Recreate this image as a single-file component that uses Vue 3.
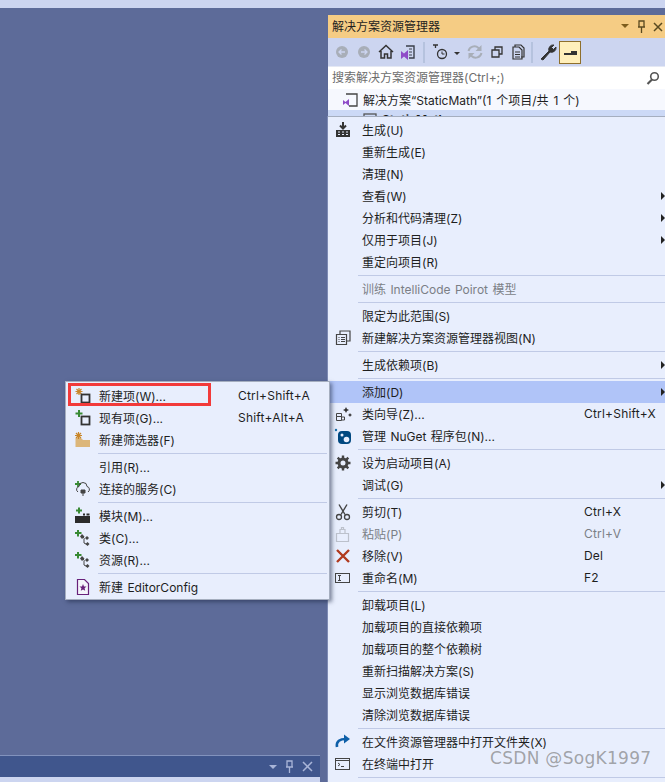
<script setup>
const rightMenu = [
  { t: '生成(U)', i: 'build' }, { t: '重新生成(E)' }, { t: '清理(N)' },
  { t: '查看(W)', a: 1 }, { t: '分析和代码清理(Z)', a: 1 }, { t: '仅用于项目(J)', a: 1 }, { t: '重定向项目(R)' },
  { s: 1 }, { t: '训练 IntelliCode Poirot 模型', d: 1 }, { s: 1 },
  { t: '限定为此范围(S)' }, { t: '新建解决方案资源管理器视图(N)', i: 'view' }, { s: 1 },
  { t: '生成依赖项(B)', a: 1 }, { s: 1 },
  { t: '添加(D)', a: 1, h: 1 }, { t: '类向导(Z)...', k: 'Ctrl+Shift+X', i: 'wizard' }, { t: '管理 NuGet 程序包(N)...', i: 'nuget' }, { s: 1 },
  { t: '设为启动项目(A)', i: 'gear' }, { t: '调试(G)', a: 1 }, { s: 1 },
  { t: '剪切(T)', k: 'Ctrl+X', i: 'cut' }, { t: '粘贴(P)', k: 'Ctrl+V', i: 'paste', d: 1 },
  { t: '移除(V)', k: 'Del', i: 'x' }, { t: '重命名(M)', k: 'F2', i: 'rename' }, { s: 1 },
  { t: '卸载项目(L)' }, { t: '加载项目的直接依赖项' }, { t: '加载项目的整个依赖树' },
  { t: '重新扫描解决方案(S)' }, { t: '显示浏览数据库错误' }, { t: '清除浏览数据库错误' }, { s: 1 },
  { t: '在文件资源管理器中打开文件夹(X)', i: 'open' }, { t: '在终端中打开', i: 'term' }, { s: 1 }
]
const leftMenu = [
  { t: '新建项(W)...', k: 'Ctrl+Shift+A', i: 'newitem' }, { t: '现有项(G)...', k: 'Shift+Alt+A', i: 'existing' },
  { t: '新建筛选器(F)', i: 'filter' }, { s: 1 },
  { t: '引用(R)...' }, { t: '连接的服务(C)', i: 'service' }, { s: 1 },
  { t: '模块(M)...', i: 'module' }, { t: '类(C)...', i: 'cls' }, { t: '资源(R)...', i: 'cls' }, { s: 1 },
  { t: '新建 EditorConfig', i: 'config' }
]
</script>

<template>
  <div class="screen">
    <div class="workspace">
      <div class="topstrip"></div>
      <div class="editor"></div>
      <div class="toolhead">
        <svg class="hicon" width="46" height="14" viewBox="0 0 46 14">
          <path d="M2 5h8l-4 4z" fill="#a9b5d8" />
          <path d="M20 1h5v6h-5zM19 7h7M22.500 7v6" fill="none" stroke="#a9b5d8" stroke-width="1.300" />
          <path d="M36 2l9 9M45 2l-9 9" stroke="#a9b5d8" stroke-width="1.500" />
        </svg>
      </div>
      <div class="toolbody"></div>
    </div>

    <aside class="panel">
      <div class="title">
        <span>解决方案资源管理器</span>
        <svg width="46" height="14" viewBox="0 0 46 14">
          <path d="M2 4h8l-4 4z" fill="#7d5d1c" />
          <path d="M20 1h5v6h-5zM19 7h7M22.500 7v6" fill="none" stroke="#5a4a20" stroke-width="1.300" />
          <path d="M35 3l8 8M43 3l-8 8" stroke="#5a4a20" stroke-width="1.500" />
        </svg>
      </div>
      <div class="toolbar">
        <svg width="246" height="28" viewBox="0 0 246 28">
          <circle cx="18" cy="14" r="6" fill="#a8aeb8" /><path d="M21 14h-6m2.500-2.500L15 14l2.500 2.500" stroke="#ccd5f0" stroke-width="1.300" fill="none" />
          <circle cx="40" cy="14" r="6" fill="#a8aeb8" /><path d="M37 14h6m-2.500-2.500L43 14l-2.500 2.500" stroke="#ccd5f0" stroke-width="1.300" fill="none" />
          <path d="M55 14l7-6.500 7 6.500M57 13v7h3.500v-4h3v4H67v-7" fill="none" stroke="#333" stroke-width="1.500" />
          <path d="M77 13l3 2.500 4-3.500v10l-4-3.500-3 2.500z" fill="#8f4cc8" />
          <path d="M82 8h8v12h-5" fill="none" stroke="#3a3f4a" stroke-width="1.400" /><path d="M85 11h3M85 14h3M85 17h3" stroke="#3a3f4a" />
          <path d="M100 4v21" stroke="#9fb0cc" />
          <path d="M109 7h5M111.500 7v3" stroke="#333" stroke-width="1.300" /><circle cx="118" cy="16" r="4.500" fill="none" stroke="#333" stroke-width="1.300" /><path d="M118 13.500V16h2.500" fill="none" stroke="#333" />
          <path d="M130 14h6l-3 3z" fill="#333" />
          <g transform="translate(7.500 0)"><path d="M137 13a6 6 0 0 1 10-3l2 2M150 15a6 6 0 0 1-10 3l-2-2" fill="none" stroke="#a8aeb8" stroke-width="2" /><path d="M150 7v6h-6M137 21v-6h6" fill="#a8aeb8" /></g>
          <g transform="translate(8 0)"><path d="M160 12h7v7h-7zM163 12V9h7v7h-3" fill="none" stroke="#333" stroke-width="1.300" /></g>
          <g transform="translate(8 0)"><path d="M183 9v-2h6l3 3v9h-3M181 9h6l3 3v9h-9z" fill="#ccd5f0" stroke="#333" stroke-width="1.200" /><path d="M183 14h5M183 16.500h5M183 19h5" stroke="#333" /></g>
          <path d="M208 4v21" stroke="#9fb0cc" />
          <g transform="translate(10 0)"><path d="M207 21l8-8a4.500 4.500 0 0 1 5-6l-2.500 2.500 2 2L222 9a4.500 4.500 0 0 1-6 5l-7 8z" fill="#333" stroke="#333" /></g>
        </svg>
        <div class="pinbtn"><i></i></div>
      </div>
      <div class="search">
        <span>搜索解决方案资源管理器(Ctrl+;)</span>
        <svg width="14" height="14" viewBox="0 0 14 14"><circle cx="8.500" cy="5.500" r="3.800" fill="none" stroke="#555" stroke-width="1.600" /><path d="M6 8.500L1.500 13" stroke="#555" stroke-width="2.200" /></svg>
      </div>
      <div class="tree">
        <div class="node">
          <svg width="16" height="16" viewBox="0 0 16 16"><path d="M4 2h11v12H7" fill="none" stroke="#444" stroke-width="1.300" /><path d="M1 8l2.500 2L7 7v7l-3.500-3L1 13z" fill="#8f4cc8" /></svg>
          <span>解决方案“StaticMath”(1 个项目/共 1 个)</span>
        </div>
        <div class="node selected">
          <svg width="14" height="14" viewBox="0 0 14 14"><rect x="1" y="1" width="12" height="12" fill="none" stroke="#555" stroke-width="1.300" /></svg>
          <b>StaticMath</b>
        </div>
      </div>
    </aside>

    <div class="menu right">
      <template v-for="(m, n) in rightMenu" :key="n">
        <div v-if="m.s" class="sep"></div>
        <div v-else class="row" :class="{ dis: m.d, hot: m.h }">
          <span class="ico">
            <svg v-if="m.i" width="18" height="18" viewBox="0 0 18 18">
              <template v-if="m.i === 'build'">
                <path d="M9 1v6M6 4.500L9 7.500l3-3" fill="none" stroke="#333" stroke-width="2" />
                <path d="M2 9h14v7H2z" fill="#333" /><path d="M4 11h2M8 11h2M12 11h2M4 13.500h2M8 13.500h2M12 13.500h2" stroke="#e8eefd" />
              </template>
              <template v-else-if="m.i === 'view'">
                <path d="M6 5V2h10v10h-3" fill="none" stroke="#444" stroke-width="1.200" />
                <path d="M2.500 5.500h10v10h-10z" fill="#e8eefd" stroke="#444" stroke-width="1.200" />
                <path d="M4.500 8.500h1M7 8.500h4M4.500 10.500h1M7 10.500h4M4.500 12.500h1M7 12.500h4" stroke="#444" />
              </template>
              <template v-else-if="m.i === 'wizard'">
                <path d="M2.500 8.500h5v3h-5zM2.500 11.500h5v4h-5zM7.500 12h3v3h-3z" fill="none" stroke="#444" />
                <path d="M12 2l1 2 2 1-2 1-1 2-1-2-2-1 2-1zM16 8l.7 1.300L18 10l-1.300.7L16 12l-.7-1.300-1.300-.7 1.300-.7z" fill="#333" />
              </template>
              <template v-else-if="m.i === 'nuget'">
                <circle cx="2" cy="3" r="1.200" fill="#1a6fa8" />
                <rect x="4" y="4" width="13" height="13" rx="4" fill="#004880" />
                <circle cx="8" cy="8" r="1.500" fill="#e8eefd" /><circle cx="12.500" cy="12.500" r="2.800" fill="#e8eefd" />
              </template>
              <template v-else-if="m.i === 'gear'">
                <circle cx="9" cy="9" r="4" fill="none" stroke="#444" stroke-width="3" />
                <path d="M9 1.500v15M1.500 9h15M3.700 3.700l10.600 10.600M14.300 3.700L3.700 14.300" stroke="#444" stroke-width="2.400" stroke-dasharray="3 9" />
              </template>
              <template v-else-if="m.i === 'cut'">
                <path d="M5 1.500l6 10M13 1.500l-6 10" stroke="#444" stroke-width="1.400" />
                <circle cx="5" cy="14" r="2.500" fill="none" stroke="#444" stroke-width="1.300" /><circle cx="13" cy="14" r="2.500" fill="none" stroke="#444" stroke-width="1.300" />
              </template>
              <template v-else-if="m.i === 'paste'">
                <path d="M2.500 8.500h12v8h-12zM6 8.500v-4h5v4M7.500 4.500v-2h2v2" fill="none" stroke="#bcc1cc" stroke-width="1.200" />
              </template>
              <template v-else-if="m.i === 'x'">
                <path d="M3 3l12 12M15 3L3 15" stroke="#b03a1e" stroke-width="2.400" />
              </template>
              <template v-else-if="m.i === 'rename'">
                <rect x="1.500" y="4.500" width="14" height="9" fill="none" stroke="#444" />
                <path d="M4 6.500h3M5.500 6.500v5M4 11.500h3" fill="none" stroke="#444" />
              </template>
              <template v-else-if="m.i === 'open'">
                <path d="M3 14c-1-6 3-8 9-8" fill="none" stroke="#0e5fa8" stroke-width="2.600" />
                <path d="M10 1.500l6 4.500-6 4.500z" fill="#0e5fa8" />
              </template>
              <template v-else-if="m.i === 'term'">
                <rect x="1.500" y="3.500" width="14" height="11" fill="none" stroke="#444" />
                <path d="M1.500 5.500h14" stroke="#444" /><path d="M4 8l2 1.500L4 11M7 11.500h3" fill="none" stroke="#444" />
              </template>
            </svg>
          </span>
          <span class="label">{{ m.t }}</span>
          <span v-if="m.k" class="key">{{ m.k }}</span>
          <span v-if="m.a" class="arrow"></span>
        </div>
      </template>
    </div>

    <div class="menu left">
      <template v-for="(m, n) in leftMenu" :key="n">
        <div v-if="m.s" class="sep"></div>
        <div v-else class="row">
          <span class="ico">
            <svg v-if="m.i" width="18" height="18" viewBox="0 0 18 18">
              <template v-if="m.i === 'newitem'">
                <path d="M5 1v7M1.500 4.500h7M2.500 2l5 5M7.500 2l-5 5" stroke="#c8862a" stroke-width="1.200" />
                <rect x="7.500" y="7.500" width="8" height="8" fill="none" stroke="#333" stroke-width="1.800" />
              </template>
              <template v-else-if="m.i === 'existing'">
                <path d="M5 1v7M1.500 4.500h7" stroke="#388a34" stroke-width="2" />
                <rect x="7.500" y="7.500" width="8" height="8" fill="none" stroke="#333" stroke-width="1.800" />
              </template>
              <template v-else-if="m.i === 'filter'">
                <path d="M1.500 7H7l2 2h7v7H1.500z" fill="#dcb67a" />
                <path d="M4.500 1v7M1 4.500h7M2 2l5 5M7 2L2 7" stroke="#c8862a" stroke-width="1.200" />
              </template>
              <template v-else-if="m.i === 'service'">
                <path d="M4 1v6M1 4h6" stroke="#388a34" stroke-width="1.800" />
                <path d="M4 12a3 3 0 0 1 1-5.500 4 4 0 0 1 8 0 3 3 0 0 1 1 5.500" fill="none" stroke="#444" />
                <path d="M7 10h4v3H7zM9 13v3" fill="#444" stroke="#444" />
              </template>
              <template v-else-if="m.i === 'module'">
                <path d="M5 0.500v6M2 3.500h6" stroke="#388a34" stroke-width="2" />
                <path d="M1 9h15v7H1z" fill="#2b2b2b" /><path d="M9 6.500h2v2H9zM12.500 6.500h3v2h-3z" fill="#2b2b2b" />
              </template>
              <template v-else-if="m.i === 'cls'">
                <path d="M4 1v6.500M1 4h6.500" stroke="#388a34" stroke-width="2" />
                <path d="M8 7l2.500 2.500M10 9.500V14l3 1.500" fill="none" stroke="#444" />
                <path d="M8 5l2.500 2.500L8 10 6 7.500zM13 7l2 2-2 2-2-2zM13.500 13l2 2-2 2-2-2z" fill="#444" />
              </template>
              <template v-else-if="m.i === 'config'">
                <path d="M3.500 1.500h7l4 4v11h-11z" fill="#f4f4fb" stroke="#68217a" stroke-width="1.200" />
                <path d="M9 6l1 2.400 2.500.2-1.900 1.700.6 2.500L9 11.500l-2.200 1.300.6-2.500-1.900-1.700L8 8.400z" fill="#68217a" />
              </template>
            </svg>
          </span>
          <span class="label">{{ m.t }}</span>
          <span v-if="m.k" class="key">{{ m.k }}</span>
        </div>
      </template>
    </div>

    <div class="redbox"></div>
    <div class="mark">CSDN @SogK1997</div>
  </div>
</template>

<style scoped>
.screen {
  position: relative;
  display: flex;
  width: 665px;
  height: 782px;
  overflow: hidden;
  background: #5d6b99;
  font-family: Inter, "Noto Sans CJK SC", sans-serif;
  font-size: 12px;
  color: #1e1e1e;
}
.workspace {
  display: flex;
  flex-direction: column;
  width: 320px;
  margin-right: 8px;
  flex: none;
}
.topstrip {
  height: 8px;
  width: 665px;
  background: #ccd5f0;
  flex: none;
}
.editor { flex: 1; }
.toolhead {
  display: flex;
  align-items: center;
  justify-content: flex-end;
  height: 22px;
  padding-right: 7px;
  border-top: 1px solid #8292bd;
  background: #40568d;
  box-sizing: border-box;
  flex: none;
}
.toolbody {
  height: 5px;
  background: #ccd5f0;
  flex: none;
}
.panel {
  flex: 1;
  margin-top: 15px;
  background: #fff;
  display: flex;
  flex-direction: column;
  z-index: 1;
}
.title {
  display: flex;
  align-items: center;
  justify-content: space-between;
  height: 23px;
  padding: 0 0 0 4px;
  background: #f5cc84;
  flex: none;
}
.title span { margin-bottom: 2px; }
.toolbar {
  display: flex;
  align-items: center;
  height: 28px;
  background: #ccd5f0;
  flex: none;
}
.toolbar svg { flex: none; margin-right: -16px; margin-left: -4px; }
.pinbtn {
  position: relative;
  width: 22px;
  height: 23px;
  box-sizing: border-box;
  border: 1px solid #8e6f2c;
  background: #ffefbb;
  margin-left: 5px;
}
.pinbtn i {
  position: absolute;
  left: 4px;
  top: 11px;
  width: 13px;
  height: 2px;
  background: #333;
}
.pinbtn i::after {
  content: "";
  position: absolute;
  right: 0;
  top: -2px;
  width: 6px;
  height: 2px;
  background: #333;
}
.search {
  display: flex;
  align-items: center;
  justify-content: space-between;
  height: 23px;
  padding: 0 0 0 4px;
  background: #fff;
  border-top: 1px solid #e4e8f4;
  box-sizing: border-box;
  color: #6d6d6d;
  flex: none;
}
.search span { margin-bottom: 3px; }
.search svg { margin-right: 5px; }
.tree { flex: 1; background: #f6f8fe; }
.node {
  display: flex;
  align-items: center;
  gap: 5px;
  height: 21px;
  padding-left: 14px;
  word-spacing: 1.500px;
}
.node.selected {
  align-items: flex-start;
  height: 22px;
  padding: 3px 0 0 36px;
  box-sizing: border-box;
  background: #ccd9f6;
  line-height: 14px;
}
.node.selected svg { margin-left: -1px; }
.menu {
  position: absolute;
  box-sizing: border-box;
  background: #e8eefd;
  border: 1px solid #a5aebf;
  padding: 2px;
  z-index: 2;
}
.menu.right {
  left: 328px;
  top: 116px;
  width: 345px;
  box-shadow: -1px 0 0 #7e8bb4;
  border-left: 0;
  padding-left: 0;
}
.menu.left {
  left: 65px;
  top: 381px;
  width: 265px;
  padding-top: 3px;
  padding-bottom: 1px;
  box-shadow: 2px 2px 4px rgba(30, 40, 70, .55);
  z-index: 3;
}
.row {
  display: flex;
  align-items: center;
  height: 22px;
  white-space: nowrap;
}
.row.hot { background: #b0c4f8; }
.row.dis { color: #7b7f86; }
.ico {
  display: flex;
  align-items: center;
  justify-content: center;
  width: 30px;
  margin-right: 1px;
  flex: none;
}
.right .ico { margin-right: 4px; }
.label {
  flex: 1;
  margin-bottom: 2px;
  word-spacing: 1px;
}
.key {
  position: absolute;
  margin-bottom: 2px;
  letter-spacing: .2px;
  white-space: nowrap;
}
.right .key { left: 256px; }
.left .key { left: 172px; }
.arrow {
  position: absolute;
  left: 333px;
  width: 0;
  height: 0;
  border-left: 4px solid #222;
  border-top: 4px solid transparent;
  border-bottom: 4px solid transparent;
}
.sep {
  height: 1px;
  margin: 2px 0 2px 30px;
  background: #c0cae6;
}
.redbox {
  position: absolute;
  left: 68px;
  top: 383px;
  width: 143px;
  height: 23px;
  box-sizing: border-box;
  border: 3px solid #f23a3a;
  z-index: 4;
}
.mark {
  position: absolute;
  left: 490px;
  top: 748px;
  z-index: 5;
  font-family: "DejaVu Sans", sans-serif;
  font-size: 17px;
  color: rgba(120, 120, 120, .65);
  letter-spacing: .3px;
  white-space: nowrap;
}
</style>
